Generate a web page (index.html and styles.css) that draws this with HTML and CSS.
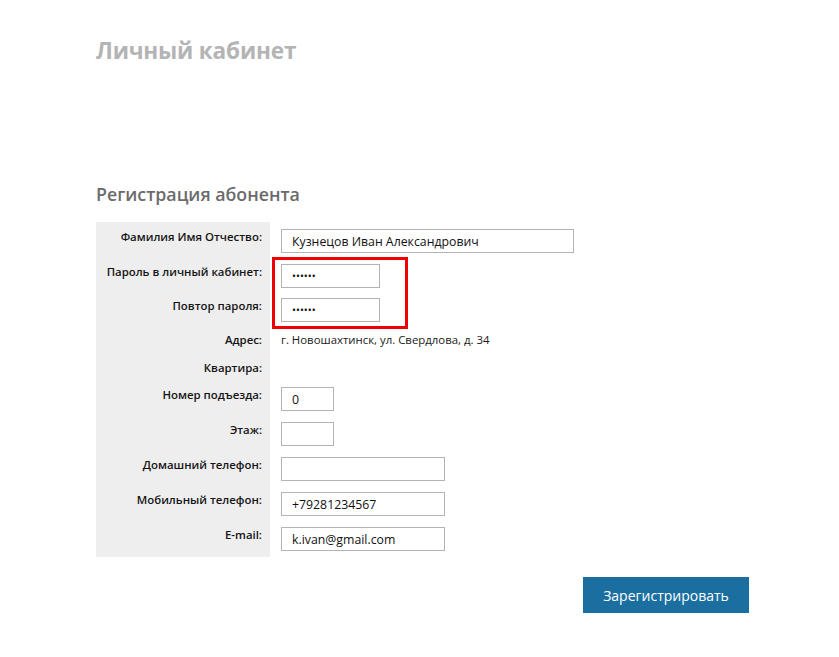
FILE: index.html
```html
<!DOCTYPE html>
<html lang="ru">
<head>
<meta charset="utf-8">
<title>Личный кабинет</title>
<link rel="stylesheet" href="styles.css">
</head>
<body>
<div class="page">
  <h1 class="title">Личный кабинет</h1>
  <h2 class="subtitle">Регистрация абонента</h2>
  <form class="form">
    <div class="row">
      <div class="label">Фамилия Имя Отчество:</div>
      <div class="value"><input class="field wide" type="text" value="Кузнецов Иван Александрович"></div>
    </div>
    <div class="row tight">
      <div class="label">Пароль в личный кабинет:</div>
      <div class="value"><input class="field pass" type="password" value="123456"></div>
    </div>
    <div class="row">
      <div class="label">Повтор пароля:</div>
      <div class="value"><input class="field pass" type="password" value="123456"></div>
    </div>
    <div class="row text-row">
      <div class="label">Адрес:</div>
      <div class="value">г. Новошахтинск, ул. Свердлова, д. 34</div>
    </div>
    <div class="row text-row second">
      <div class="label">Квартира:</div>
      <div class="value"></div>
    </div>
    <div class="row">
      <div class="label">Номер подъезда:</div>
      <div class="value"><input class="field small" type="text" value="0"></div>
    </div>
    <div class="row">
      <div class="label">Этаж:</div>
      <div class="value"><input class="field small" type="text" value=""></div>
    </div>
    <div class="row">
      <div class="label">Домашний телефон:</div>
      <div class="value"><input class="field medium" type="text" value=""></div>
    </div>
    <div class="row">
      <div class="label">Мобильный телефон:</div>
      <div class="value"><input class="field medium" type="text" value="+79281234567"></div>
    </div>
    <div class="row last">
      <div class="label">E-mail:</div>
      <div class="value"><input class="field medium" type="text" value="k.ivan@gmail.com"></div>
    </div>
    <div class="highlight"></div>
  </form>
  <div class="actions">
    <button class="submit" type="button">Зарегистрировать</button>
  </div>
</div>
</body>
</html>
```
FILE: styles.css
```css
html, body {
  margin: 0;
  padding: 0;
  background: #ffffff;
}
body {
  font-family: "Open Sans", "Liberation Sans", sans-serif;
  color: #1a1a1a;
}
.page {
  padding: 0 0 0 96px;
  width: 653px;
}
.title {
  margin: 0;
  padding-top: 35px;
  font-size: 22.6px;
  line-height: 32px;
  font-weight: 700;
  color: #b4b4b4;
  letter-spacing: -0.2px;
}
.subtitle {
  margin: 114px 0 0 0;
  font-size: 17.8px;
  line-height: 26px;
  font-weight: 600;
  color: #6b6b6b;
}
.form {
  position: relative;
  margin-top: 15px;
  display: flex;
  flex-direction: column;
}
.row {
  display: flex;
  height: 35px;
}
.row.tight {
  height: 34px;
}
.row.text-row {
  height: 28px;
}
.row.text-row.second {
  height: 26px;
}
.row.last {
  height: 37px;
}
.label {
  width: 166px;
  flex: none;
  background: #eeeeee;
  text-align: right;
  padding: 7px 8px 0 0;
  font-size: 11.4px;
  line-height: 16px;
  font-weight: 600;
  color: #141414;
  white-space: nowrap;
}
.text-row .label, .text-row .value {
  padding-top: 6px;
}
.value {
  padding: 7px 0 0 11px;
  font-size: 11.4px;
  line-height: 16px;
  color: #1a1a1a;
}
.field {
  box-sizing: border-box;
  height: 24px;
  border: 1px solid #b3b3b3;
  border-radius: 0;
  padding: 0 10px;
  margin: 0;
  font-family: "Open Sans", "Liberation Sans", sans-serif;
  font-size: 12.3px;
  color: #111111;
  background: #ffffff;
  outline: none;
}
.field.wide { width: 293px; }
.field.pass { width: 99px; font-size: 10.5px; }
.field.small { width: 53px; }
.field.medium { width: 164px; }
.highlight {
  position: absolute;
  left: 176px;
  top: 35px;
  width: 136px;
  height: 72px;
  box-sizing: border-box;
  border: 3px solid #f00000;
  pointer-events: none;
}
.actions {
  display: flex;
  justify-content: flex-end;
  margin-top: 20px;
}
.submit {
  width: 166px;
  height: 36px;
  border: 0;
  border-radius: 0;
  background: #1b6fa0;
  color: #ffffff;
  font-family: "Open Sans", "Liberation Sans", sans-serif;
  font-size: 14px;
  cursor: pointer;
}
```
